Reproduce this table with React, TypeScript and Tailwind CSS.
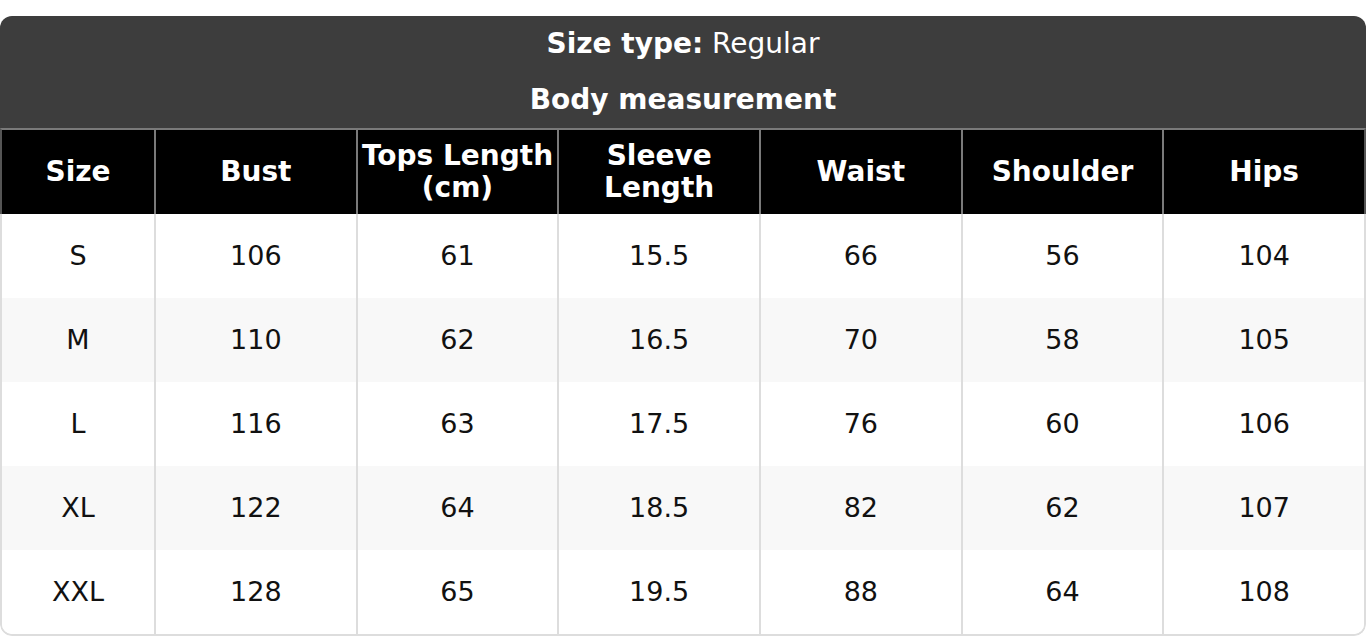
import React from "react";

const headers = ["Size", "Bust", "Tops Length (cm)", "Sleeve Length", "Waist", "Shoulder", "Hips"];
const rows = [
  ["S", "106", "61", "15.5", "66", "56", "104"],
  ["M", "110", "62", "16.5", "70", "58", "105"],
  ["L", "116", "63", "17.5", "76", "60", "106"],
  ["XL", "122", "64", "18.5", "82", "62", "107"],
  ["XXL", "128", "65", "19.5", "88", "64", "108"],
];

export default function App() {
  return (
    <div className="bg-white pt-[16px] w-[1366px]" style={{ fontFamily: '"DejaVu Sans", Verdana, sans-serif' }}>
      <div className="rounded-[12px] overflow-hidden bg-white">
        <div className="bg-[#3d3d3d] text-white text-[28px] leading-[32px]">
          <div className="h-[56px] flex items-center justify-center">
            <span><span className="font-bold">Size type:</span> Regular</span>
          </div>
          <div className="h-[56px] flex items-center justify-center font-bold">Body measurement</div>
        </div>
        <div className="grid grid-cols-[152px_repeat(6,1fr)] bg-black border-t-2 border-x-2 border-x-[#555555] border-t-[#7a7a7a]">
          {headers.map((h, i) => (
            <div
              key={h}
              className={`h-[84px] flex items-center justify-center text-center text-white font-bold text-[28px] leading-[32px] ${i > 0 ? "border-l-2 border-[#7a7a7a]" : ""}`}
            >
              {h}
            </div>
          ))}
        </div>
        <div className="border-x-2 border-b-2 border-[#dddddd] rounded-b-[12px] overflow-hidden">
          {rows.map((r, ri) => (
            <div key={ri} className={`grid grid-cols-[152px_repeat(6,1fr)] ${ri % 2 === 1 ? "bg-[#f8f8f8]" : "bg-white"}`}>
              {r.map((c, ci) => (
                <div
                  key={ci}
                  className={`h-[84px] flex items-center justify-center text-[27px] text-[#111111] ${ci > 0 ? "border-l-2 border-[#dddddd]" : ""}`}
                >
                  {c}
                </div>
              ))}
            </div>
          ))}
        </div>
      </div>
    </div>
  );
}
